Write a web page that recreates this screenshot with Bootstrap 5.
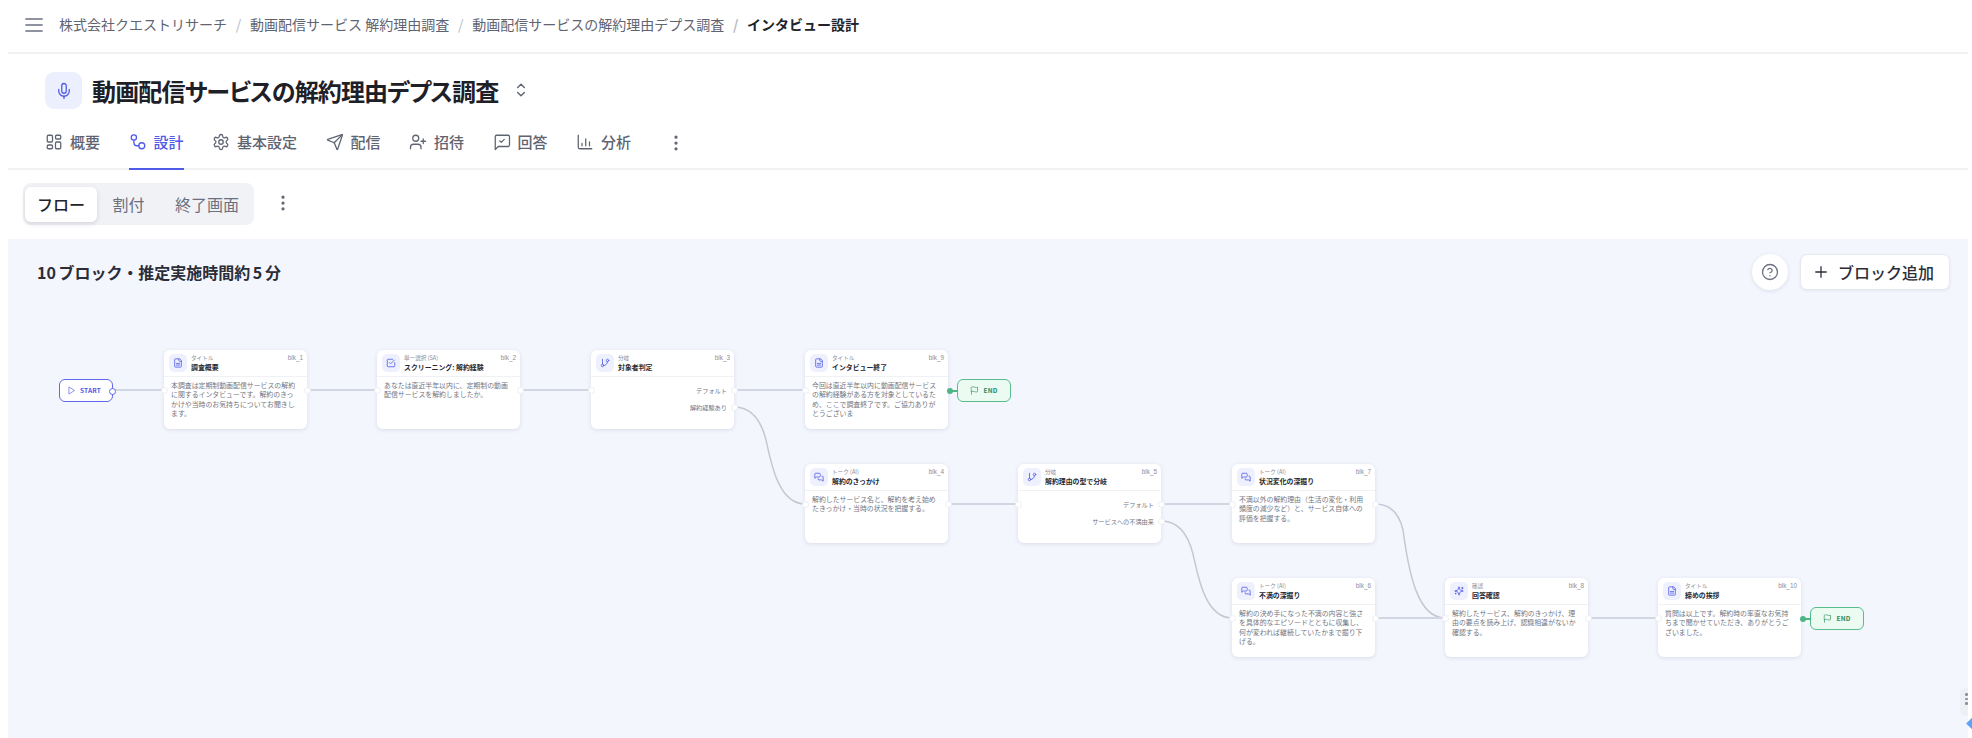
<!doctype html>
<html lang="ja">
<head>
<meta charset="utf-8">
<title>インタビュー設計</title>
<link href="https://cdn.jsdelivr.net/npm/bootstrap@5.3.0/dist/css/bootstrap.min.css" rel="stylesheet">
<style>
html,body{height:738px;overflow:hidden;background:#fff}
body{font-family:"Noto Sans CJK JP","Noto Sans",sans-serif;color:#20232c}
svg.ic{fill:none;stroke:currentColor;stroke-width:1.7;stroke-linecap:round;stroke-linejoin:round;flex:none}
.shell{margin-left:8px;width:1960px;height:738px}
.topbar{height:54px;border-bottom:2px solid #f1f2f4;padding-left:17px;padding-bottom:3px}
.topbar svg{color:#6b7080;margin-right:16px}
.crumbs{--bs-breadcrumb-divider-color:#b8bcc6;--bs-breadcrumb-item-active-color:#20232c;--bs-breadcrumb-item-padding-x:8.75px;font-size:14px;margin:0}
.crumbs a{color:#5f6472;text-decoration:none}
.crumbs .active{font-weight:700}
.titlerow{height:71px;padding:18px 0 0 37px;gap:10px}
.titletile{width:37px;height:37px;border-radius:9px;background:#eceffe;color:#4f5ae6}
.pagetitle{font-size:24px;font-weight:700;margin:0;line-height:38px;color:#1e2028;font-feature-settings:"palt";letter-spacing:-.85px}
.titlerow .chev{color:#5f6472;margin-left:3px}
.tabbar{height:45px;border-bottom:2px solid #f1f2f4;padding-left:37px;gap:28.5px;flex-wrap:nowrap}
.tabitem{--bs-nav-link-padding-x:0;--bs-nav-link-padding-y:0;color:#5f6472;font-size:15px;font-weight:500;height:45px;gap:7px;border-bottom:2px solid transparent;margin-bottom:-2px;padding-bottom:9px}
.tabitem:hover{color:#5f6472}
.tabitem.active{color:#4f5ae6;border-bottom-color:#4f5ae6}
.tabdots{color:#5f6472;margin-left:6px;margin-bottom:8px}
.segrow{height:69px;padding:13px 0 0 15px}
.segwrap{width:231px;height:42px;background:#f1f2f5;border-radius:8px;padding:4px 3px 3px 2px}
.segbtn{height:35px;padding:0 15px 0 15.500px;font-size:16px;color:#6b7080;border-radius:6px;line-height:35px;flex:none}
.segbtn.active{background:#fff;color:#20232c;font-weight:500;width:72px;text-align:center;padding:0;box-shadow:0 2px 5px rgba(30,40,80,.14)}
.segdots{color:#5f6472;margin-left:19px;margin-top:10px}
.flowarea{height:499px;background:#f4f6fe;overflow:hidden}
.flowhead{height:70px;padding:15px 18px 0 29px}
.flowsum{font-size:16px;font-weight:700;color:#2b2e38;margin:6px 0 0;word-spacing:-1px}
.helpbtn{width:36px;height:36px;background:#fff;border-radius:50%;color:#6b7080;box-shadow:0 1px 4px rgba(30,40,80,.12);margin-right:12px}
.addbtn{height:36px;width:150px;background:#fff;border:1px solid #e6e8f0;border-radius:7px;font-size:16px;font-weight:500;color:#2b2e38;padding:0 4px 0 0;gap:8px;box-shadow:0 1px 3px rgba(30,40,80,.08)}
.edges{position:absolute;left:0;top:0;width:1960px;height:499px}
.edges path{fill:none;stroke:#d2d6e4;stroke-width:2.2}
.edges path.cv{stroke:#c4c7d4;stroke-width:1.5}
.fnode{position:absolute;width:143px;height:79px;background:#fff;border-radius:6px;box-shadow:0 1px 4px rgba(40,50,90,.13)}
.fhead{height:27px;border-bottom:1px solid #f0f1f4;padding:4px 4px 0 5px;gap:4px}
.ftile{width:18px;height:18px;border-radius:5px;background:#eef0fe;color:#5560e6;flex:none}
.ftile svg{stroke-width:2}
.ftype{font-size:5.6px;line-height:8px;color:#8a8e9a;white-space:nowrap}
.fname{font-size:6.9px;line-height:10px;font-weight:700;color:#262933;white-space:nowrap}
.fid{font-size:6.4px;line-height:8px;color:#8a8e9a;font-family:"Liberation Sans",sans-serif;margin-left:auto}
.fbody{font-size:6.9px;line-height:9.3px;color:#72767f;padding:4px 7px 0 7px}
.fbranch{font-size:6.2px;color:#72767f;line-height:17px;padding:5px 7px 0;text-align:right}
.port{position:absolute;width:7px;height:7px;border-radius:50%;background:#fff;border:1px solid #eceef4}
.pin{left:-3.5px;top:36.5px}
.pout{right:-3.5px;top:36.5px}
.pout2{right:-3.5px;top:53.5px}
.fcap{position:absolute;width:54px;height:23px;border-radius:6px;font-size:6.5px;font-weight:700;gap:4px;letter-spacing:.2px}
.capstart{background:#fff;border:1.4px solid #5f69ec;color:#4f5ae6}
.capend{background:#ecfbf1;border:1.4px solid #57bd8d;color:#2f8a62}
.capdot{position:absolute;left:-11px;top:8px;width:6px;height:6px;border-radius:50%;background:#4eb585}
.capstem{position:absolute;left:-7px;top:10px;width:7px;height:2px;background:#4eb585}
.capout{position:absolute;right:-4px;top:8px;width:7px;height:7px;border-radius:50%;background:#fff;border:1.2px solid #5f69ec}
.sidegrip{position:absolute;right:0;top:449px;width:8px;height:28px;background:#eef0f4;border-radius:6px 0 0 6px;padding:5px 0 0 5px}
.sidegrip i{display:block;width:2.5px;height:2.5px;border-radius:50%;background:#8a8e9a;margin-bottom:2px}
.bluemark{position:absolute;left:1968px;top:719px;width:9px;height:9px;background:#5ea4f6;transform:rotate(45deg)}
</style>
</head>
<body>
<svg width="0" height="0" class="position-absolute">
<defs>
<symbol id="i-doc" viewBox="0 0 24 24"><path d="M15 2H6a2 2 0 0 0-2 2v16a2 2 0 0 0 2 2h12a2 2 0 0 0 2-2V7Z"/><path d="M14 2v4a2 2 0 0 0 2 2h4"/><path d="M8 13h8M8 17h8"/></symbol>
<symbol id="i-check" viewBox="0 0 24 24"><path d="M21 11v8a2 2 0 0 1-2 2H5a2 2 0 0 1-2-2V5a2 2 0 0 1 2-2h11"/><path d="m8 11 3 3 9-9"/></symbol>
<symbol id="i-branch" viewBox="0 0 24 24"><path d="M6 3v12"/><circle cx="18" cy="6" r="3"/><circle cx="6" cy="18" r="3"/><path d="M18 9a9 9 0 0 1-9 9"/></symbol>
<symbol id="i-chat" viewBox="0 0 24 24"><path d="M15 10a2 2 0 0 1-2 2H6l-4 3V5a2 2 0 0 1 2-2h9a2 2 0 0 1 2 2z"/><path d="M19 10h1a2 2 0 0 1 2 2v10l-4-3h-6a2 2 0 0 1-2-2v-1"/></symbol>
<symbol id="i-spark" viewBox="0 0 24 24"><path d="M9.900 15.500A2 2 0 0 0 8.500 14L2.400 12.500a.5.5 0 0 1 0-1L8.500 9.900A2 2 0 0 0 9.900 8.500l1.600-6.100a.5.5 0 0 1 1 0L14 8.500a2 2 0 0 0 1.500 1.400l6.100 1.600a.5.5 0 0 1 0 1L15.500 14a2 2 0 0 0-1.500 1.500l-1.500 6.100a.5.5 0 0 1-1 0z"/><path d="M20 3v4M22 5h-4M4 17v2M5 18H3"/></symbol>
<symbol id="i-flag" viewBox="0 0 24 24"><path d="M4 15s1-1 4-1 5 2 8 2 4-1 4-1V3s-1 1-4 1-5-2-8-2-4 1-4 1z"/><path d="M4 22v-7"/></symbol>
<symbol id="i-dots" viewBox="0 0 24 24"><circle cx="12" cy="5" r="1.100"/><circle cx="12" cy="12" r="1.100"/><circle cx="12" cy="19" r="1.100"/></symbol>
</defs>
</svg>

<div class="shell d-flex flex-column">
  <header class="topbar d-flex align-items-center">
    <svg class="ic" width="18" height="18" viewBox="0 0 18 18"><path d="M1 3h16M1 9h16M1 15h16"/></svg>
    <nav aria-label="breadcrumb">
      <ol class="breadcrumb crumbs">
        <li class="breadcrumb-item"><a href="#">株式会社クエストリサーチ</a></li>
        <li class="breadcrumb-item"><a href="#">動画配信サービス 解約理由調査</a></li>
        <li class="breadcrumb-item"><a href="#">動画配信サービスの解約理由デプス調査</a></li>
        <li class="breadcrumb-item active" aria-current="page">インタビュー設計</li>
      </ol>
    </nav>
  </header>

  <div class="titlerow d-flex align-items-start">
    <div class="titletile d-flex align-items-center justify-content-center">
      <svg class="ic" width="18" height="18" viewBox="0 0 24 24"><path d="M12 2a3 3 0 0 0-3 3v7a3 3 0 0 0 6 0V5a3 3 0 0 0-3-3Z"/><path d="M19 10v2a7 7 0 0 1-14 0v-2"/><path d="M12 19v3"/></svg>
    </div>
    <h1 class="pagetitle">動画配信サービスの解約理由デプス調査</h1>
    <svg class="ic chev mt-2" width="20" height="20" viewBox="0 0 24 24"><path d="m8 15 4 4 4-4"/><path d="m8 9 4-4 4 4"/></svg>
  </div>

  <ul class="nav tabbar">
    <li class="nav-item"><a class="nav-link tabitem d-flex align-items-center" href="#"><svg class="ic" width="18" height="18" viewBox="0 0 24 24"><rect x="3" y="3" width="7" height="9" rx="1.500"/><rect x="14" y="3" width="7" height="5" rx="1.500"/><rect x="14" y="12" width="7" height="9" rx="1.500"/><rect x="3" y="16" width="7" height="5" rx="1.500"/></svg>概要</a></li>
    <li class="nav-item"><a class="nav-link tabitem active d-flex align-items-center" href="#"><svg class="ic" width="18" height="18" viewBox="0 0 24 24"><circle cx="6.500" cy="6" r="3.500"/><rect x="13" y="13" width="8" height="8" rx="4"/><path d="M6.500 9.500V13a4 4 0 0 0 4 4H13"/></svg>設計</a></li>
    <li class="nav-item"><a class="nav-link tabitem d-flex align-items-center" href="#"><svg class="ic" width="18" height="18" viewBox="0 0 24 24"><path d="M12.220 2h-.44a2 2 0 0 0-2 2v.18a2 2 0 0 1-1 1.730l-.43.250a2 2 0 0 1-2 0l-.15-.08a2 2 0 0 0-2.730.73l-.22.380a2 2 0 0 0 .73 2.730l.15.100a2 2 0 0 1 1 1.720v.510a2 2 0 0 1-1 1.740l-.15.090a2 2 0 0 0-.73 2.730l.22.380a2 2 0 0 0 2.730.73l.15-.08a2 2 0 0 1 2 0l.43.250a2 2 0 0 1 1 1.730V20a2 2 0 0 0 2 2h.44a2 2 0 0 0 2-2v-.18a2 2 0 0 1 1-1.730l.43-.250a2 2 0 0 1 2 0l.15.080a2 2 0 0 0 2.730-.73l.22-.390a2 2 0 0 0-.73-2.730l-.15-.080a2 2 0 0 1-1-1.740v-.5a2 2 0 0 1 1-1.740l.15-.090a2 2 0 0 0 .73-2.730l-.22-.380a2 2 0 0 0-2.730-.73l-.15.080a2 2 0 0 1-2 0l-.43-.250a2 2 0 0 1-1-1.730V4a2 2 0 0 0-2-2z"/><circle cx="12" cy="12" r="3"/></svg>基本設定</a></li>
    <li class="nav-item"><a class="nav-link tabitem d-flex align-items-center" href="#"><svg class="ic" width="18" height="18" viewBox="0 0 24 24"><path d="M14.500 21.700a.5.5 0 0 0 .94 0l6.500-19a.5.5 0 0 0-.63-.63l-19 6.500a.5.5 0 0 0 0 .94l7.900 3.200a2 2 0 0 1 1.100 1.100z"/><path d="M21.800 2.200 10.900 13.100"/></svg>配信</a></li>
    <li class="nav-item"><a class="nav-link tabitem d-flex align-items-center" href="#"><svg class="ic" width="18" height="18" viewBox="0 0 24 24"><path d="M16 21v-2a4 4 0 0 0-4-4H6a4 4 0 0 0-4 4v2"/><circle cx="9" cy="7" r="4"/><path d="M19 8v6M22 11h-6"/></svg>招待</a></li>
    <li class="nav-item"><a class="nav-link tabitem d-flex align-items-center" href="#"><svg class="ic" width="18" height="18" viewBox="0 0 24 24"><path d="M22 16a2 2 0 0 1-2 2H7l-4 4V5a2 2 0 0 1 2-2h15a2 2 0 0 1 2 2z"/><path d="m9 10.500 2 2 4-4"/></svg>回答</a></li>
    <li class="nav-item"><a class="nav-link tabitem d-flex align-items-center" href="#"><svg class="ic" width="18" height="18" viewBox="0 0 24 24"><path d="M3 3v16a2 2 0 0 0 2 2h16"/><path d="M8 17v-3M13 17V8M18 17v-5"/></svg>分析</a></li>
    <li class="nav-item d-flex align-items-center"><svg class="ic tabdots" width="20" height="20"><use href="#i-dots"/></svg></li>
  </ul>

  <div class="segrow d-flex align-items-start">
    <div class="segwrap d-flex">
      <div class="segbtn active">フロー</div>
      <div class="segbtn">割付</div>
      <div class="segbtn">終了画面</div>
    </div>
    <svg class="ic segdots" width="20" height="20"><use href="#i-dots"/></svg>
  </div>

  <main class="flowarea position-relative">
    <svg class="edges" viewBox="8 239 1960 499">
      <path d="M114 390H164"/>
      <path d="M307 390H377"/>
      <path d="M520 390H591"/>
      <path d="M734 390H805"/>
      <path class="cv" d="M734 407C752 407 761 420 766 440C771 462 778 504 805 504"/>
      <path d="M948 504H1018"/>
      <path d="M1161 504H1232"/>
      <path class="cv" d="M1161 521C1179 521 1188 534 1193 554C1198 576 1205 618 1232 618"/>
      <path class="cv" d="M1375 504C1393 504 1400 517 1403 530C1409 575 1418 618 1445 618"/>
      <path d="M1375 618H1445"/>
      <path d="M1588 618H1658"/>
    </svg>

    <div class="flowhead d-flex align-items-start justify-content-between position-relative">
      <p class="flowsum">10 ブロック・推定実施時間約 5 分</p>
      <div class="d-flex">
        <button class="btn helpbtn p-0 d-flex align-items-center justify-content-center" type="button" aria-label="ヘルプ"><svg class="ic" width="18" height="18" viewBox="0 0 24 24"><circle cx="12" cy="12" r="10"/><path d="M9.100 9a3 3 0 0 1 5.800 1c0 2-3 3-3 3"/><path d="M12 17h.01"/></svg></button>
        <button class="btn addbtn d-flex align-items-center justify-content-center" type="button"><svg class="ic" width="18" height="18" viewBox="0 0 24 24"><path d="M5 12h14M12 5v14"/></svg>ブロック追加</button>
      </div>
    </div>

    <div class="fcap capstart d-flex align-items-center justify-content-center" style="left:51px;top:140px">
      <svg class="ic" width="9" height="9" viewBox="0 0 24 24"><path d="M6 3l14 9-14 9z"/></svg>START<span class="capout"></span>
    </div>

    <article class="fnode" style="left:156px;top:111px">
      <div class="fhead d-flex"><div class="ftile d-flex align-items-center justify-content-center"><svg class="ic" width="10" height="10"><use href="#i-doc"/></svg></div><div><div class="ftype">タイトル</div><div class="fname">調査概要</div></div><div class="fid">blk_1</div></div>
      <div class="fbody">本調査は定期制動画配信サービスの解約に関するインタビューです。解約のきっかけや当時のお気持ちについてお聞きします。</div>
      <span class="port pin"></span><span class="port pout"></span>
    </article>

    <article class="fnode" style="left:369px;top:111px">
      <div class="fhead d-flex"><div class="ftile d-flex align-items-center justify-content-center"><svg class="ic" width="10" height="10"><use href="#i-check"/></svg></div><div><div class="ftype">単一選択 (SA)</div><div class="fname">スクリーニング: 解約経験</div></div><div class="fid">blk_2</div></div>
      <div class="fbody">あなたは直近半年以内に、定期制の動画配信サービスを解約しましたか。</div>
      <span class="port pin"></span><span class="port pout"></span>
    </article>

    <article class="fnode" style="left:583px;top:111px">
      <div class="fhead d-flex"><div class="ftile d-flex align-items-center justify-content-center"><svg class="ic" width="10" height="10"><use href="#i-branch"/></svg></div><div><div class="ftype">分岐</div><div class="fname">対象者判定</div></div><div class="fid">blk_3</div></div>
      <div class="fbranch"><div>デフォルト</div><div>解約経験あり</div></div>
      <span class="port pin"></span><span class="port pout"></span><span class="port pout2"></span>
    </article>

    <article class="fnode" style="left:797px;top:111px">
      <div class="fhead d-flex"><div class="ftile d-flex align-items-center justify-content-center"><svg class="ic" width="10" height="10"><use href="#i-doc"/></svg></div><div><div class="ftype">タイトル</div><div class="fname">インタビュー終了</div></div><div class="fid">blk_9</div></div>
      <div class="fbody">今回は直近半年以内に動画配信サービスの解約経験がある方を対象としているため、ここで調査終了です。ご協力ありがとうございま</div>
      <span class="port pin"></span>
    </article>

    <div class="fcap capend d-flex align-items-center justify-content-center" style="left:949px;top:140px">
      <span class="capdot"></span><span class="capstem"></span>
      <svg class="ic" width="9" height="9"><use href="#i-flag"/></svg>END
    </div>

    <article class="fnode" style="left:797px;top:225px">
      <div class="fhead d-flex"><div class="ftile d-flex align-items-center justify-content-center"><svg class="ic" width="10" height="10"><use href="#i-chat"/></svg></div><div><div class="ftype">トーク (AI)</div><div class="fname">解約のきっかけ</div></div><div class="fid">blk_4</div></div>
      <div class="fbody">解約したサービス名と、解約を考え始めたきっかけ・当時の状況を把握する。</div>
      <span class="port pin"></span><span class="port pout"></span>
    </article>

    <article class="fnode" style="left:1010px;top:225px">
      <div class="fhead d-flex"><div class="ftile d-flex align-items-center justify-content-center"><svg class="ic" width="10" height="10"><use href="#i-branch"/></svg></div><div><div class="ftype">分岐</div><div class="fname">解約理由の型で分岐</div></div><div class="fid">blk_5</div></div>
      <div class="fbranch"><div>デフォルト</div><div>サービスへの不満由来</div></div>
      <span class="port pin"></span><span class="port pout"></span><span class="port pout2"></span>
    </article>

    <article class="fnode" style="left:1224px;top:225px">
      <div class="fhead d-flex"><div class="ftile d-flex align-items-center justify-content-center"><svg class="ic" width="10" height="10"><use href="#i-chat"/></svg></div><div><div class="ftype">トーク (AI)</div><div class="fname">状況変化の深掘り</div></div><div class="fid">blk_7</div></div>
      <div class="fbody">不満以外の解約理由（生活の変化・利用頻度の減少など）と、サービス自体への評価を把握する。</div>
      <span class="port pin"></span><span class="port pout"></span>
    </article>

    <article class="fnode" style="left:1224px;top:339px">
      <div class="fhead d-flex"><div class="ftile d-flex align-items-center justify-content-center"><svg class="ic" width="10" height="10"><use href="#i-chat"/></svg></div><div><div class="ftype">トーク (AI)</div><div class="fname">不満の深掘り</div></div><div class="fid">blk_6</div></div>
      <div class="fbody">解約の決め手になった不満の内容と強さを具体的なエピソードとともに収集し、何が変われば継続していたかまで掘り下げる。</div>
      <span class="port pin"></span><span class="port pout"></span>
    </article>

    <article class="fnode" style="left:1437px;top:339px">
      <div class="fhead d-flex"><div class="ftile d-flex align-items-center justify-content-center"><svg class="ic" width="10" height="10"><use href="#i-spark"/></svg></div><div><div class="ftype">確認</div><div class="fname">回答確認</div></div><div class="fid">blk_8</div></div>
      <div class="fbody">解約したサービス、解約のきっかけ、理由の要点を読み上げ、認識相違がないか確認する。</div>
      <span class="port pin"></span><span class="port pout"></span>
    </article>

    <article class="fnode" style="left:1650px;top:339px">
      <div class="fhead d-flex"><div class="ftile d-flex align-items-center justify-content-center"><svg class="ic" width="10" height="10"><use href="#i-doc"/></svg></div><div><div class="ftype">タイトル</div><div class="fname">締めの挨拶</div></div><div class="fid">blk_10</div></div>
      <div class="fbody">質問は以上です。解約時の率直なお気持ちまで聞かせていただき、ありがとうございました。</div>
      <span class="port pin"></span>
    </article>

    <div class="fcap capend d-flex align-items-center justify-content-center" style="left:1802px;top:368px">
      <span class="capdot"></span><span class="capstem"></span>
      <svg class="ic" width="9" height="9"><use href="#i-flag"/></svg>END
    </div>

    <div class="sidegrip"><i></i><i></i><i></i></div>
  </main>
</div>
<span class="bluemark"></span>
<script src="https://cdn.jsdelivr.net/npm/bootstrap@5.3.0/dist/js/bootstrap.bundle.min.js"></script>
</body>
</html>
